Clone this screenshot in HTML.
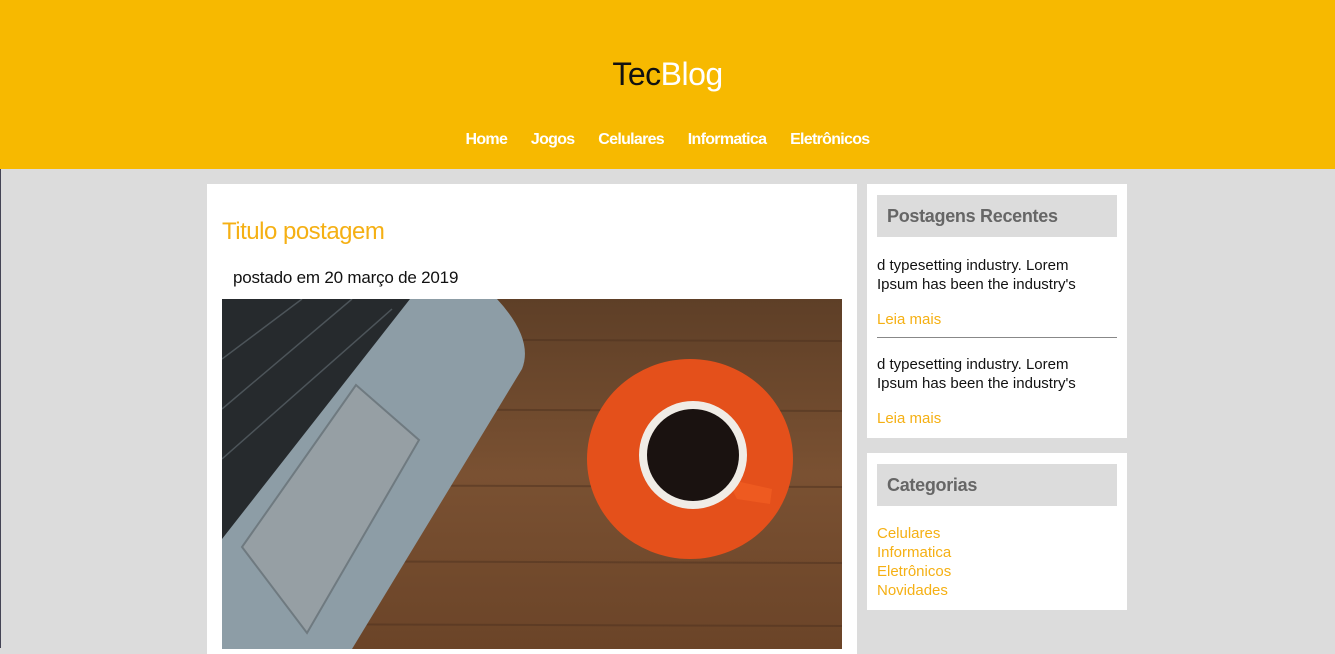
<!DOCTYPE html>
<html><head><style>
body{margin:0;width:1335px;height:648px;overflow:hidden;background:#dcdcdc;font-family:"Liberation Sans","DejaVu Sans",sans-serif;position:relative}
.hdr{position:absolute;left:0;top:0;width:1335px;height:169px;background:#f7b900}
.logo{position:absolute;top:56px;left:0;width:1335px;text-align:center;font-size:32px;color:#111;letter-spacing:-0.5px}
.logo span{color:#fff}
.nav{position:absolute;top:131px;left:0;width:1335px;text-align:center;color:#fff;font-weight:bold;font-size:16px;letter-spacing:-0.7px}
.nav a{margin:0 10px}
.main{position:absolute;left:207px;top:184px;width:650px;height:470px;background:#fff}
.main h1{position:absolute;left:15px;top:34px;margin:0;font-size:24px;color:#f5b014;font-weight:normal;letter-spacing:-0.5px}
.date{position:absolute;left:26px;top:84px;font-size:17px;color:#111;letter-spacing:-0.2px}
.box{position:absolute;left:867px;width:260px;background:#fff}
.bh{position:absolute;left:10px;top:11px;width:240px;height:42px;background:#dcdcdc;color:#666;font-size:18px;font-weight:bold;line-height:42px;box-sizing:border-box;padding-left:10px;letter-spacing:-0.3px}
.t{position:absolute;left:10px;font-size:15px;color:#111;line-height:19px}
.y{position:absolute;left:10px;font-size:15px;color:#f5b014;line-height:19px}
</style></head><body>
<div style="position:absolute;left:0;top:0;width:1px;height:648px;background:#445"></div>
<div class="hdr"><div class="logo">Tec<span>Blog</span></div>
<div class="nav"><a>Home</a> <a>Jogos</a> <a>Celulares</a> <a>Informatica</a> <a>Eletrônicos</a></div></div>
<div class="main"><h1>Titulo postagem</h1><div class="date">postado em 20 março de 2019</div>
<svg style="position:absolute;left:15px;top:115px" width="620" height="350" viewBox="0 0 620 350">
<defs><linearGradient id="w" x1="0" y1="0" x2="0" y2="1"><stop offset="0" stop-color="#5e3f27"/><stop offset=".5" stop-color="#7a5132"/><stop offset="1" stop-color="#6b4428"/></linearGradient></defs>
<rect width="620" height="350" fill="url(#w)"/>
<g stroke="#4e3220" stroke-width="2" opacity=".5"><line x1="0" y1="40" x2="620" y2="42"/><line x1="0" y1="110" x2="620" y2="112"/><line x1="0" y1="186" x2="620" y2="188"/><line x1="0" y1="262" x2="620" y2="264"/><line x1="0" y1="325" x2="620" y2="327"/></g>
<path d="M0 0 L275 0 Q312 40 300 70 L130 350 L0 350 Z" fill="#8d9da6"/>
<path d="M0 0 L188 0 L0 240 Z" fill="#262a2d"/>
<g stroke="#5d666c" stroke-width="1.5" opacity=".7"><line x1="0" y1="60" x2="80" y2="0"/><line x1="0" y1="110" x2="130" y2="0"/><line x1="0" y1="160" x2="170" y2="10"/></g>
<path d="M134 86 L197 141 L85 334 L20 248 Z" fill="#969fa4" stroke="#6f7a80" stroke-width="2"/>
<ellipse cx="468" cy="160" rx="103" ry="100" fill="#e4501b"/>
<path d="M505 180 L550 190 L548 205 L515 200Z" fill="#ee5a20"/>
<circle cx="471" cy="156" r="54" fill="#f0ece6"/>
<circle cx="471" cy="156" r="46" fill="#1a1210"/>
</svg></div>
<div class="box" style="top:184px;height:254px"><div class="bh">Postagens Recentes</div>
<div class="t" style="top:72px">d typesetting industry. Lorem<br>Ipsum has been the industry's</div>
<div class="y" style="top:126px">Leia mais</div>
<div style="position:absolute;left:10px;top:153px;width:240px;height:1px;background:#888"></div>
<div class="t" style="top:171px">d typesetting industry. Lorem<br>Ipsum has been the industry's</div>
<div class="y" style="top:225px">Leia mais</div></div>
<div class="box" style="top:453px;height:157px"><div class="bh">Categorias</div>
<div class="y" style="top:71px">Celulares<br>Informatica<br>Eletrônicos<br>Novidades</div></div>
</body></html>
